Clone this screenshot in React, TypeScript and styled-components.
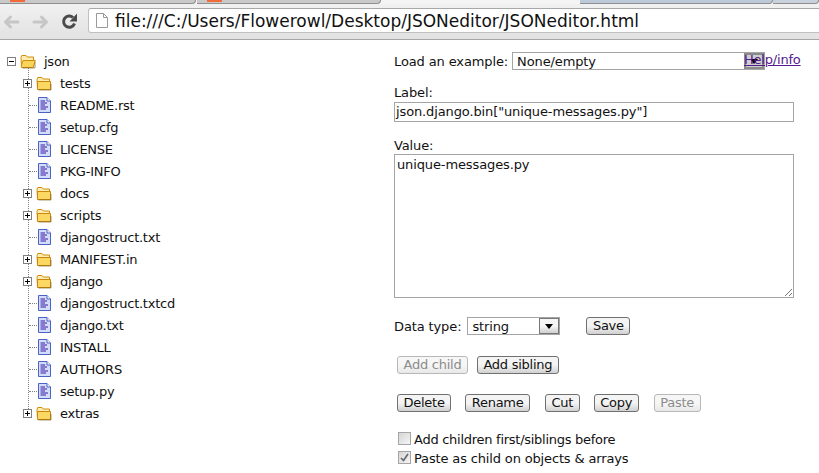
import React from "react";
import styled, { createGlobalStyle } from "styled-components";

const Global = createGlobalStyle`
  html, body { margin: 0; padding: 0; background: #fff; overflow: hidden; }
  body { font-family: "DejaVu Sans", Verdana, sans-serif; font-size: 13px; color: #111; letter-spacing: -0.12px; }
`;

const Page = styled.div`
  width: 819px;
  height: 473px;
  overflow: hidden;
  display: flex;
  flex-direction: column;
`;

const TabStrip = styled.div`
  height: 4px;
  background: #f4f4f4;
  display: flex;
`;

const Tab = styled.div<{ $w: number; $ml?: number; $tone?: string }>`
  width: ${(p) => p.$w}px;
  margin-left: ${(p) => p.$ml ?? 0}px;
  box-sizing: border-box;
  background: ${(p) => p.$tone ?? "#c9c9c9"};
  border-bottom: 1px solid #8f8f8f;
  border-right: 1px solid #8f8f8f;
  border-bottom-right-radius: 4px;
  padding-left: 10px;
`;

const Favicon = styled.div`
  width: 15px;
  height: 2px;
  background: #f4693a;
`;

const Toolbar = styled.div`
  height: 36px;
  box-sizing: border-box;
  background: linear-gradient(#f1f1f1, #e2e2e2);
  border-bottom: 1px solid #a6a6a6;
  display: flex;
  align-items: center;
  padding-bottom: 2px;
`;

const NavIcon = styled.svg`
  width: 29px;
  height: 24px;
  flex: none;
`;

const AddressBar = styled.div`
  margin-left: 1px;
  flex: 1;
  height: 25px;
  margin-right: -8px;
  box-sizing: border-box;
  background: #fff;
  border: 1px solid #c0c0c0;
  border-top-color: #a8a8a8;
  border-radius: 3px;
  display: flex;
  align-items: center;
  padding-left: 7px;
  gap: 7px;
  font-size: 17px;
  letter-spacing: 0;
  color: #111;
  white-space: nowrap;
`;

const Main = styled.div`
  flex: 1;
  display: flex;
`;

const TreePane = styled.div`
  width: 394px;
  flex: none;
  box-sizing: border-box;
  padding: 10px 0 0 7px;
`;

const RootRow = styled.div`
  height: 22px;
  display: flex;
  align-items: center;
`;

const ChildList = styled.div`
  position: relative;
  margin-left: 21px;
  &::before {
    content: "";
    position: absolute;
    left: 0;
    top: -4px;
    bottom: 11px;
    border-left: 1px dotted #808080;
  }
`;

const Row = styled.div`
  height: 22px;
  display: flex;
  align-items: center;
`;

const Expander = styled.span<{ $open?: boolean }>`
  width: 9px;
  height: 9px;
  box-sizing: border-box;
  border: 1px solid #808080;
  background: #fff;
  position: relative;
  flex: none;
  &::before {
    content: "";
    position: absolute;
    left: 1px;
    right: 1px;
    top: 3px;
    height: 1px;
    background: #000;
  }
  &::after {
    content: "";
    display: ${(p) => (p.$open ? "none" : "block")};
    position: absolute;
    top: 1px;
    bottom: 1px;
    left: 3px;
    width: 1px;
    background: #000;
  }
`;

const ChildExpander = styled(Expander)`
  margin-left: -5px;
  z-index: 1;
`;

const Connector = styled.span`
  width: 8px;
  margin-left: 1px;
  border-top: 1px dotted #808080;
  flex: none;
`;

const FolderSvg = styled.svg<{ $gap: number }>`
  width: 16px;
  height: 15px;
  flex: none;
  margin-left: ${(p) => p.$gap}px;
`;

const FileSvg = styled.svg`
  width: 13px;
  height: 16px;
  flex: none;
  margin-left: 1px;
`;

const Name = styled.span<{ $pad: number }>`
  margin-left: ${(p) => p.$pad}px;
  color: #111;
  letter-spacing: -0.25px;
  white-space: nowrap;
`;

const Panel = styled.div`
  flex: 1;
  padding: 11px 0 0 0;
  display: flex;
  flex-direction: column;
`;

const ExampleRow = styled.div`
  height: 20px;
  display: flex;
  align-items: center;
  position: relative;
`;

const InlineLabel = styled.span`
  white-space: nowrap;
`;

const FakeSelect = styled.div<{ $w: number; $ml: number }>`
  width: ${(p) => p.$w}px;
  height: 18px;
  box-sizing: border-box;
  border: 1px solid #a5a5a5;
  background: #fff;
  margin-left: ${(p) => p.$ml}px;
  padding-left: 4px;
  display: flex;
  align-items: center;
  justify-content: space-between;
`;

const Arrow = styled.span<{ $dark?: boolean }>`
  width: 20px;
  height: 16px;
  box-sizing: border-box;
  border: ${(p) => (p.$dark ? "2px solid #8a8a8a" : "1px solid #777")};
  background: ${(p) => (p.$dark ? "#cfcfcf" : "linear-gradient(#f6f6f6 50%, #cfcfcf)")};
  display: flex;
  align-items: center;
  justify-content: center;
  &::after {
    content: "";
    border-left: 4px solid transparent;
    border-right: 4px solid transparent;
    border-top: 5px solid #000;
  }
`;

const HelpLink = styled.a`
  position: absolute;
  left: 350px;
  top: 1px;
  color: #551a8b;
  text-decoration: underline;
  letter-spacing: -0.2px;
`;

const FieldLabel = styled.div<{ $top: number }>`
  margin-top: ${(p) => p.$top}px;
  line-height: 16px;
  height: 16px;
`;

const TextField = styled.div`
  width: 400px;
  height: 20px;
  box-sizing: border-box;
  border: 1px solid #a5a5a5;
  padding-left: 1px;
  line-height: 18px;
  white-space: nowrap;
  margin-top: 1px;
`;

const TextArea = styled.div`
  width: 400px;
  height: 144px;
  box-sizing: border-box;
  border: 1px solid #a5a5a5;
  padding: 2px;
  line-height: 16px;
  position: relative;
`;

const Grip = styled.svg`
  position: absolute;
  right: 0;
  bottom: 0;
  width: 9px;
  height: 9px;
`;

const TypeRow = styled.div`
  display: flex;
  align-items: center;
  height: 20px;
  margin-top: 18px;
`;

const Btn = styled.button<{ $ml?: number }>`
  font-family: "DejaVu Sans", sans-serif;
  font-size: 13px;
  letter-spacing: -0.25px;
  height: 18px;
  padding: 0 5.5px;
  margin: 0 0 0 ${(p) => p.$ml ?? 0}px;
  box-sizing: border-box;
  border: 1px solid #707070;
  border-radius: 3px;
  background: linear-gradient(#f4f4f4 50%, #d0d0d0);
  color: #111;
  line-height: 14px;
  white-space: nowrap;
  &:disabled {
    color: #8c8c8c;
    border-color: #b8b8b8;
    background: linear-gradient(#f6f6f6 50%, #e8e8e8);
  }
`;

const ButtonRow = styled.div<{ $top: number }>`
  display: flex;
  align-items: center;
  height: 18px;
  margin-top: ${(p) => p.$top}px;
  padding-left: 3px;
`;

const CheckRow = styled.div<{ $top: number; $track: number }>`
  display: flex;
  align-items: center;
  height: 19px;
  margin-top: ${(p) => p.$top}px;
  padding-left: 4px;
  letter-spacing: ${(p) => p.$track}px;
`;

const CheckBox = styled.span`
  width: 13px;
  height: 13px;
  flex: none;
  box-sizing: border-box;
  border: 1px solid #a5a5a5;
  background: linear-gradient(135deg, #d6d6d6, #f4f4f4);
  margin-right: 3px;
  display: flex;
  align-items: center;
  justify-content: center;
  margin-top: -3px;
`;

const Folder = ({ open, gap }: { open?: boolean; gap: number }) => (
  <FolderSvg $gap={gap} viewBox="0 0 16 15">
    <path d="M1 3.5 L1.8 1.5 H6 L7.2 3 H13.5 V12.5 H1.5 Z" fill="#fdeeb0" stroke="#d08c10" />
    {open ? (
      <path d="M3 6.5 H15.3 L13.2 13.5 H1.5 L1.2 12 Z" fill="#fbd55a" stroke="#d08c10" />
    ) : (
      <path d="M1.5 5.5 H14.5 V13.5 H1.5 Z" fill="#fcd862" stroke="#c98610" />
    )}
    <path d="M2.5 14 H15 V8" fill="none" stroke="#7a5c18" opacity="0.6" />
  </FolderSvg>
);

const FileIcon = () => (
  <FileSvg viewBox="0 0 13 16">
    <path d="M.5 .5 H9 L12.5 4 V15.5 H.5 Z" fill="#d3dcf8" stroke="#4a63c4" />
    <path d="M9 .5 V4 H12.5" fill="#fff" stroke="#4a63c4" />
    <path d="M2.5 4 H7 M2.5 6 H9 M2.5 8 H7 M2.5 10 H10 M2.5 12 H8" stroke="#3a1aa8" strokeWidth="1" />
  </FileSvg>
);

const items: { name: string; folder?: boolean }[] = [
  { name: "tests", folder: true },
  { name: "README.rst" },
  { name: "setup.cfg" },
  { name: "LICENSE" },
  { name: "PKG-INFO" },
  { name: "docs", folder: true },
  { name: "scripts", folder: true },
  { name: "djangostruct.txt" },
  { name: "MANIFEST.in", folder: true },
  { name: "django", folder: true },
  { name: "djangostruct.txtcd" },
  { name: "django.txt" },
  { name: "INSTALL" },
  { name: "AUTHORS" },
  { name: "setup.py" },
  { name: "extras", folder: true },
];

export default function App() {
  return (
    <Page>
      <Global />
      <TabStrip>
        <Tab $w={196}><Favicon /></Tab>
        <Tab $w={184} $ml={1}><Favicon /></Tab>
        <Tab $w={193} $ml={199} $tone="#bcc9d8" />
        <Tab $w={46} $tone="#c9d2dc" />
      </TabStrip>
      <Toolbar>
        <NavIcon viewBox="0 0 29 24">
          <path d="M18 13 H6 M10.5 8 L5.5 13 L10.5 18" fill="none" stroke="#c6c6c6" strokeWidth="3" strokeLinecap="round" strokeLinejoin="round" />
        </NavIcon>
        <NavIcon viewBox="0 0 29 24">
          <path d="M5 13 H17 M12.5 8 L17.5 13 L12.5 18" fill="none" stroke="#c6c6c6" strokeWidth="3" strokeLinecap="round" strokeLinejoin="round" />
        </NavIcon>
        <NavIcon viewBox="0 0 29 24">
          <path d="M16.5 14.5 A5.6 5.6 0 1 1 15 8.5" fill="none" stroke="#4a4a4a" strokeWidth="3" />
          <path d="M19 4.5 V12.5 H11.5 Z" fill="#4a4a4a" />
        </NavIcon>
        <AddressBar>
          <svg width="12" height="15" viewBox="0 0 12 15">
            <path d="M.5 .5 H7.5 L11.5 4.5 V14.5 H.5 Z M7.5 .5 V4.5 H11.5" fill="#fff" stroke="#9a9a9a" />
          </svg>
          file:///C:/Users/Flowerowl/Desktop/JSONeditor/JSONeditor.html
        </AddressBar>
      </Toolbar>
      <Main>
        <TreePane>
          <RootRow>
            <Expander $open />
            <Folder open gap={4} />
            <Name $pad={8}>json</Name>
          </RootRow>
          <ChildList>
            {items.map((it) => (
              <Row key={it.name}>
                {it.folder ? (
                  <>
                    <ChildExpander />
                    <Folder gap={4} />
                  </>
                ) : (
                  <>
                    <Connector />
                    <FileIcon />
                  </>
                )}
                <Name $pad={it.folder ? 8 : 9}>{it.name}</Name>
              </Row>
            ))}
          </ChildList>
        </TreePane>
        <Panel>
          <ExampleRow>
            <InlineLabel>Load an example:</InlineLabel>
            <FakeSelect $w={253} $ml={4}>None/empty<Arrow $dark /></FakeSelect>
            <HelpLink>Help/info</HelpLink>
          </ExampleRow>
          <FieldLabel $top={14}>Label:</FieldLabel>
          <TextField>json.django.bin["unique-messages.py"]</TextField>
          <FieldLabel $top={16}>Value:</FieldLabel>
          <TextArea>
            unique-messages.py
            <Grip viewBox="0 0 9 9">
              <path d="M1 8 L8 1 M5 8 L8 5" stroke="#777" />
            </Grip>
          </TextArea>
          <TypeRow>
            <InlineLabel>Data type:</InlineLabel>
            <FakeSelect $w={93} $ml={6}>string<Arrow /></FakeSelect>
            <Btn $ml={26}>Save</Btn>
          </TypeRow>
          <ButtonRow $top={20}>
            <Btn disabled>Add child</Btn>
            <Btn $ml={9}>Add sibling</Btn>
          </ButtonRow>
          <ButtonRow $top={20}>
            <Btn>Delete</Btn>
            <Btn $ml={14}>Rename</Btn>
            <Btn $ml={15}>Cut</Btn>
            <Btn $ml={14}>Copy</Btn>
            <Btn $ml={15} disabled>Paste</Btn>
          </ButtonRow>
          <CheckRow $top={18} $track={-0.27}>
            <CheckBox />
            Add children first/siblings before
          </CheckRow>
          <CheckRow $top={0} $track={-0.15}>
            <CheckBox>
              <svg width="9" height="9" viewBox="0 0 9 9">
                <path d="M1 5 L3.5 7.5 L8 1" fill="none" stroke="#666" strokeWidth="1.6" />
              </svg>
            </CheckBox>
            Paste as child on objects &amp; arrays
          </CheckRow>
        </Panel>
      </Main>
    </Page>
  );
}
